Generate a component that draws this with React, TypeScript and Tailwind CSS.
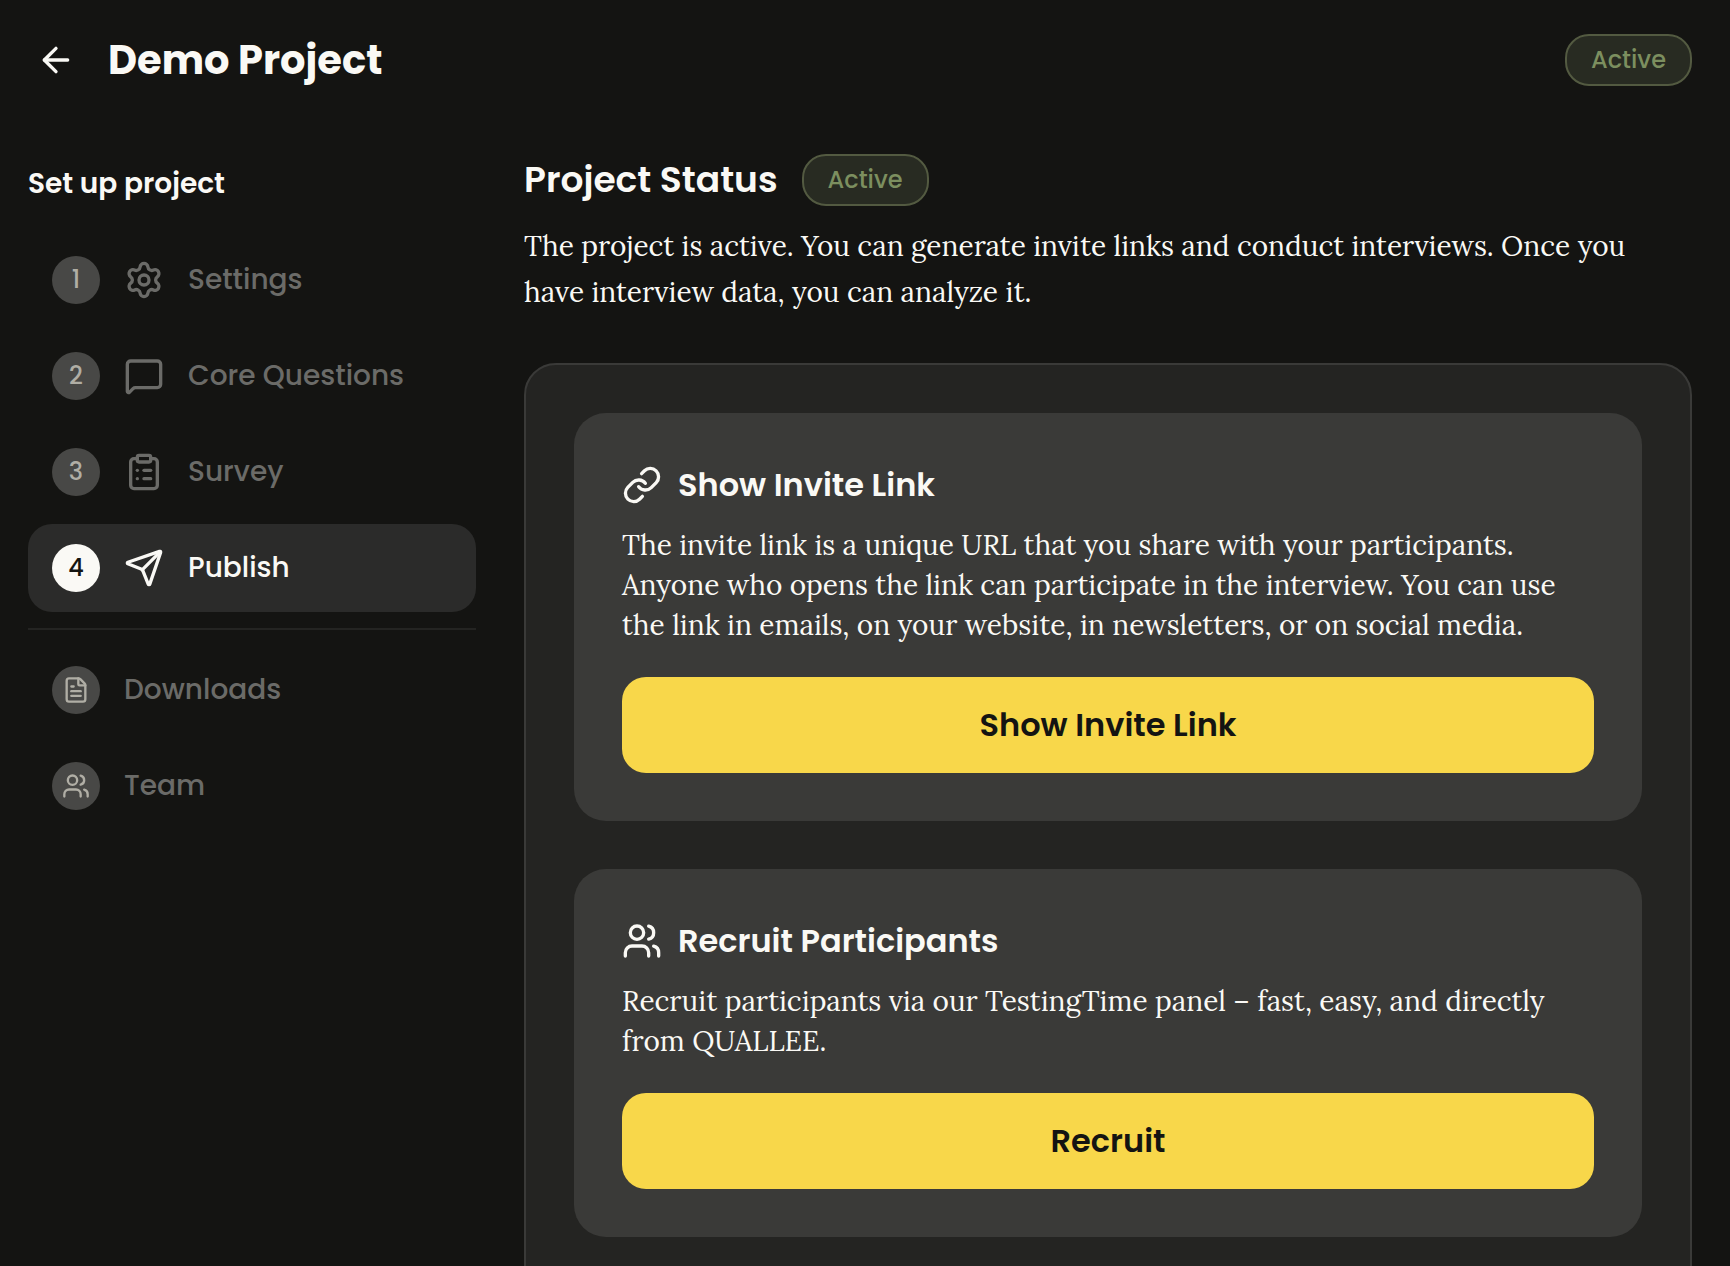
import { useState } from "react";
import {
  ArrowLeft,
  ClipboardList,
  FileText,
  Link,
  MessageSquare,
  Send,
  Settings,
  Users,
  type LucideIcon,
} from "lucide-react";

interface NavItem {
  id: string;
  label: string;
  icon: LucideIcon;
}

const STEPS: NavItem[] = [
  { id: "settings", label: "Settings", icon: Settings },
  { id: "questions", label: "Core Questions", icon: MessageSquare },
  { id: "survey", label: "Survey", icon: ClipboardList },
  { id: "publish", label: "Publish", icon: Send },
];

const EXTRAS: NavItem[] = [
  { id: "downloads", label: "Downloads", icon: FileText },
  { id: "team", label: "Team", icon: Users },
];

const CARDS = [
  {
    title: "Show Invite Link",
    icon: Link,
    text: "The invite link is a unique URL that you share with your participants. Anyone who opens the link can participate in the interview. You can use the link in emails, on your website, in newsletters, or on social media.",
    action: "Show Invite Link",
  },
  {
    title: "Recruit Participants",
    icon: Users,
    text: "Recruit participants via our TestingTime panel – fast, easy, and directly from QUALLEE.",
    action: "Recruit",
  },
];

function StatusBadge() {
  return (
    <span className="rounded-3xl border-2 border-[#535a41] bg-[#282b22] px-6 py-1.5 text-[24px] leading-9 font-medium text-[#7c8f5f]">
      Active
    </span>
  );
}

function NavButton({
  item,
  step,
  active,
  onSelect,
}: {
  item: NavItem;
  step?: number;
  active: boolean;
  onSelect: (id: string) => void;
}) {
  const Icon = item.icon;
  return (
    <button
      onClick={() => onSelect(item.id)}
      className={`flex h-[88px] w-full items-center gap-6 rounded-3xl px-6 text-left text-[28px] font-medium ${
        active ? "bg-[#2b2b2a] text-[#faf9f5]" : "text-[#6b6b68]"
      }`}
    >
      <span
        className={`flex size-12 shrink-0 items-center justify-center rounded-full text-[24px] ${
          active ? "bg-[#faf9f5] text-[#141412]" : "bg-[#484846] text-[#b0aea5]"
        }`}
      >
        {step ?? <Icon className="size-7" />}
      </span>
      {step && <Icon className="size-10 shrink-0" />}
      {item.label}
    </button>
  );
}

export default function App() {
  const [current, setCurrent] = useState("publish");

  return (
    <div className="flex h-screen flex-col overflow-hidden bg-[#141412] font-['Poppins','Inter',sans-serif] text-[#faf9f5]">
      <header className="flex h-[120px] shrink-0 items-center gap-6 pr-[38px] pl-7">
        <button aria-label="Back" className="flex size-14 items-center justify-center">
          <ArrowLeft className="size-10" />
        </button>
        <h1 className="flex-1 text-[40px] font-bold">Demo Project</h1>
        <StatusBadge />
      </header>

      <div className="flex min-h-0 flex-1 gap-12 pr-[38px] pl-7">
        {/* Sidebar */}
        <nav className="w-[448px] shrink-0 pt-[33px]">
          <h2 className="mb-[21px] text-[28px] leading-[62px] font-semibold">Set up project</h2>
          <div className="space-y-2">
            {STEPS.map((item, i) => (
              <NavButton key={item.id} item={item} step={i + 1} active={current === item.id} onSelect={setCurrent} />
            ))}
          </div>
          <hr className="my-4 border-t-2 border-[#242422]" />
          <div className="space-y-2">
            {EXTRAS.map((item) => (
              <NavButton key={item.id} item={item} active={current === item.id} onSelect={setCurrent} />
            ))}
          </div>
        </nav>

        {/* Publish step */}
        <main className="min-w-0 flex-1 overflow-y-auto pt-[33px] [scrollbar-width:none]">
          <div className="mb-4 flex h-[54px] items-center gap-6">
            <h2 className="text-[36px] font-semibold">Project Status</h2>
            <StatusBadge />
          </div>
          <p className="mb-12 pr-12 font-['Lora','Liberation_Serif',serif] text-[28px] leading-[46px]">
            The project is active. You can generate invite links and conduct interviews. Once you have interview data,
            you can analyze it.
          </p>

          <div className="space-y-12 rounded-4xl border-2 border-[#3a3a38] bg-[#242422] px-12 pt-12 pb-24">
            {CARDS.map(({ title, icon: Icon, text, action }) => (
              <section key={title} className="rounded-4xl bg-[#3a3a38] p-12">
                <h3 className="mb-4 flex items-center gap-4 text-[32px] leading-12 font-semibold">
                  <Icon className="size-10" />
                  {title}
                </h3>
                <p className="mb-8 font-['Lora','Liberation_Serif',serif] text-[28px] leading-10">{text}</p>
                <button className="h-24 w-full rounded-3xl bg-[#f8d74a] text-[32px] font-semibold text-[#141412]">
                  {action}
                </button>
              </section>
            ))}
          </div>
        </main>
      </div>
    </div>
  );
}
